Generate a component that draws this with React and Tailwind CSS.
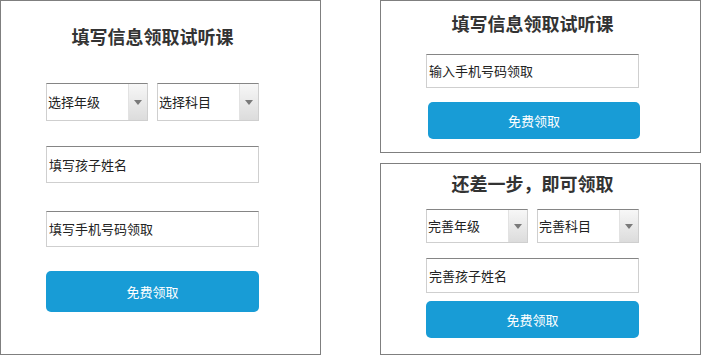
import React from 'react';

const font = { fontFamily: '"Noto Sans CJK SC", "Noto Sans", sans-serif' };

const Select = ({ label, h }) => (
  <div className={`flex w-[102px] ${h} border border-[#cfcfcf] border-t-[#858585] bg-white`}>
    <div className="flex-1 flex items-center pl-[1px] text-[13px] text-[#222]">{label}</div>
    <div className="w-[19px] flex items-center justify-center border-l border-[#e2e2e2] bg-gradient-to-b from-[#f7f7f7] to-[#dcdcdc]">
      <svg width="8" height="5" viewBox="0 0 8 5">
        <path d="M0 0 H8 L4 5 Z" fill="#7a7a7a" />
      </svg>
    </div>
  </div>
);

const Input = ({ label, h, className = '' }) => (
  <div className={`w-[213px] ${h} flex items-center pl-[2px] border border-[#cfcfcf] border-t-[#858585] bg-white text-[13px] text-[#222] ${className}`}>
    {label}
  </div>
);

const Button = ({ h, className = '' }) => (
  <div className={`w-[212px] ${h} flex items-center justify-center rounded-[5px] bg-[#189cd6] text-white text-[13px] ${className}`}>
    免费领取
  </div>
);

const Title = ({ children, className = '' }) => (
  <h2 className={`text-center pr-4 text-[18px] leading-[24px] font-bold text-[#333] ${className}`}>{children}</h2>
);

export default function App() {
  return (
    <div className="w-[701px] h-[355px] bg-white flex" style={font}>
      <div className="w-[321px] h-[355px] border border-[#7f7f7f] pt-[23px]">
        <Title>填写信息领取试听课</Title>
        <div className="ml-[45px] mt-[35px] flex gap-[9px]">
          <Select label="选择年级" h="h-[38px]" />
          <Select label="选择科目" h="h-[38px]" />
        </div>
        <Input label="填写孩子姓名" h="h-[37px]" className="ml-[45px] mt-[25px]" />
        <Input label="填写手机号码领取" h="h-[36px]" className="ml-[45px] mt-[28px]" />
        <Button h="h-[41px]" className="ml-[45px] mt-[24px] w-[213px]" />
      </div>
      <div className="ml-[59px] w-[321px] flex flex-col gap-[10px]">
        <div className="h-[153px] border border-[#7f7f7f] pt-[10px]">
          <Title>填写信息领取试听课</Title>
          <Input label="输入手机号码领取" h="h-[34px]" className="ml-[45px] mt-[19px]" />
          <Button h="h-[37px]" className="ml-[47px] mt-[14px]" />
        </div>
        <div className="h-[192px] border border-[#7f7f7f] pt-[7px]">
          <Title>还差一步，即可领取</Title>
          <div className="ml-[45px] mt-[14px] flex gap-[9px]">
            <Select label="完善年级" h="h-[34px]" />
            <Select label="完善科目" h="h-[34px]" />
          </div>
          <Input label="完善孩子姓名" h="h-[35px]" className="ml-[45px] mt-[15px]" />
          <Button h="h-[37px]" className="ml-[45px] mt-[8px] w-[213px]" />
        </div>
      </div>
    </div>
  );
}
